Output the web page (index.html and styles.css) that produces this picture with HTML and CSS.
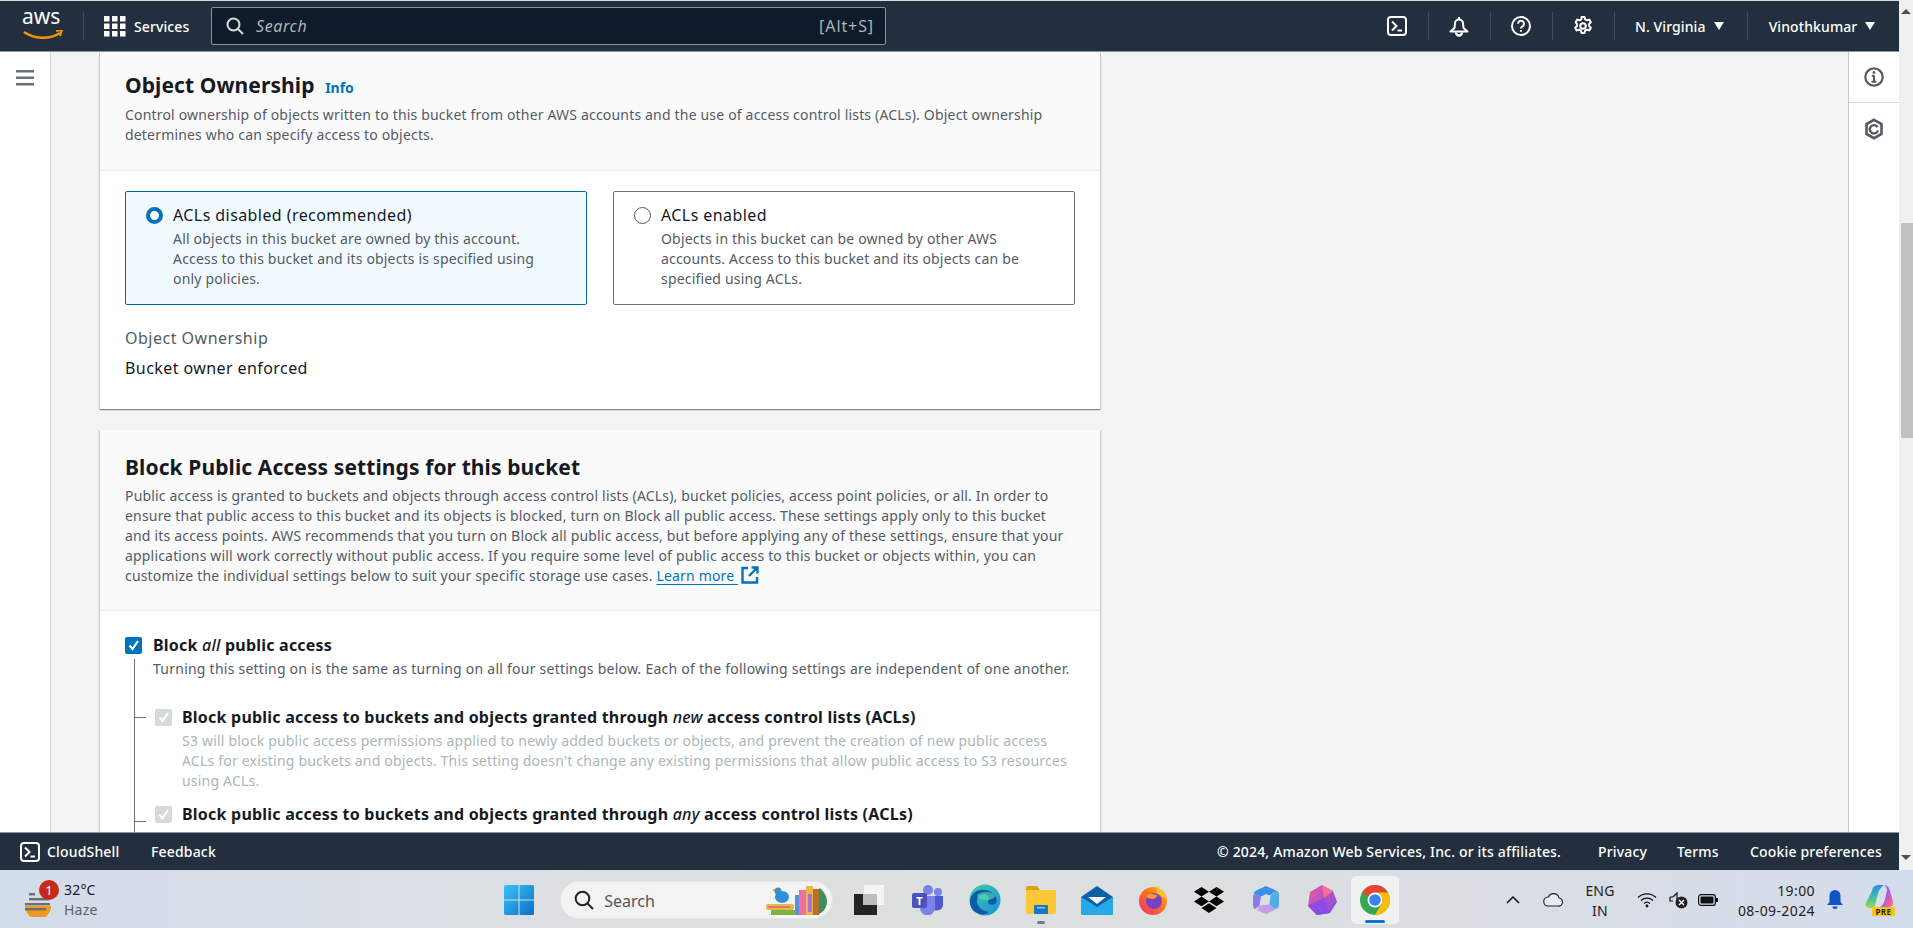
FILE: index.html
```html
<!DOCTYPE html>
<html lang="en">
<head>
<meta charset="utf-8">
<title>S3 Create bucket</title>
<link rel="stylesheet" href="styles.css">
</head>
<body>
<div class="app">
  <div class="console">
    <header class="topbar">
      <div class="aws-logo">
        <span class="aws-text">aws</span>
        <svg width="42" height="14" viewBox="0 0 42 14">
          <path d="M2 2c10 7 25 8 36 1" fill="none" stroke="#f79400" stroke-width="2.600"/>
          <path d="M34 1l6-1-2 6" fill="none" stroke="#f79400" stroke-width="2"/>
        </svg>
      </div>
      <span class="top-sep sep-logo"></span>
      <svg class="grid-icon" width="22" height="21" viewBox="0 0 22 21" fill="#fff">
        <rect x="0" y="0" width="5.500" height="5.500"/><rect x="8" y="0" width="5.500" height="5.500"/><rect x="16" y="0" width="5.500" height="5.500"/>
        <rect x="0" y="7.500" width="5.500" height="5.500"/><rect x="8" y="7.500" width="5.500" height="5.500"/><rect x="16" y="7.500" width="5.500" height="5.500"/>
        <rect x="0" y="15" width="5.500" height="5.500"/><rect x="8" y="15" width="5.500" height="5.500"/><rect x="16" y="15" width="5.500" height="5.500"/>
      </svg>
      <span class="services">Services</span>
      <div class="searchbox">
        <svg width="18" height="18" viewBox="0 0 18 18" fill="none" stroke="#d5dbdb" stroke-width="2"><circle cx="7.500" cy="7.500" r="6"/><path d="M12 12l5 5"/></svg>
        <span class="search-ph">Search</span>
        <span class="search-key">[Alt+S]</span>
      </div>
      <div class="top-right">
        <span class="top-icon">
          <svg width="20" height="20" viewBox="0 0 20 20" fill="none" stroke="#fff" stroke-width="2"><rect x="1" y="1" width="18" height="18" rx="3"/><path d="M5 5.500l4.500 4.500L5 14.500M10.500 14.500H15"/></svg>
        </span>
        <span class="top-sep"></span>
        <span class="top-icon">
          <svg width="20" height="21" viewBox="0 0 20 21" fill="none" stroke="#fff" stroke-width="2"><path d="M10 1v2.500M5.500 12L6 7.500a4 4 0 0 1 8 0l.5 4.500 4 3.500H1.500z" stroke-linejoin="round"/><path d="M7 16.500a3 3 0 0 0 6 0" stroke-width="2.400"/></svg>
        </span>
        <span class="top-sep"></span>
        <span class="top-icon">
          <svg width="20" height="20" viewBox="0 0 20 20" fill="none" stroke="#fff" stroke-width="2"><circle cx="10" cy="10" r="9"/><path d="M7 7.700a3 3 0 1 1 4.500 2.600c-1 .6-1.500 1-1.500 2.200"/><path d="M10 14v1.800"/></svg>
        </span>
        <span class="top-sep"></span>
        <span class="top-icon">
          <svg width="20" height="20" viewBox="0 0 20 20" fill="none" stroke="#fff" stroke-width="2" stroke-linejoin="round"><circle cx="10" cy="10" r="2.800"/><path d="M8.500 1h3l.6 2.300 1.900 1 2.300-.7 1.500 2.700-1.700 1.600v2.200l1.700 1.600-1.500 2.700-2.300-.7-1.900 1-.6 2.300h-3l-.6-2.300-1.900-1-2.300.7-1.500-2.700 1.700-1.600V7.900L2.700 6.300l1.500-2.700 2.300.7 1.900-1z"/></svg>
        </span>
        <span class="top-sep"></span>
        <span class="top-menu region">N. Virginia<i class="tri"></i></span>
        <span class="top-sep"></span>
        <span class="top-menu user">Vinothkumar<i class="tri"></i></span>
      </div>
    </header>

    <div class="workspace">
      <nav class="sidenav">
        <svg width="18" height="16" viewBox="0 0 18 16" fill="#687078"><rect width="18" height="2.500"/><rect y="6.500" width="18" height="2.500"/><rect y="13" width="18" height="2.500"/></svg>
      </nav>

      <main class="content">
        <section class="card">
          <div class="card-head first">
            <h2 class="card-title">Object Ownership <a class="info">Info</a></h2>
            <p class="card-desc">Control ownership of objects written to this bucket from other AWS accounts and the use of access control lists (ACLs). Object ownership determines who can specify access to objects.</p>
          </div>
          <div class="card-body own-body">
            <div class="tiles">
              <div class="tile selected">
                <span class="radio on"></span>
                <div>
                  <div class="tile-label">ACLs disabled (recommended)</div>
                  <div class="tile-desc">All objects in this bucket are owned by this account. Access to this bucket and its objects is specified using only policies.</div>
                </div>
              </div>
              <div class="tile">
                <span class="radio"></span>
                <div>
                  <div class="tile-label">ACLs enabled</div>
                  <div class="tile-desc">Objects in this bucket can be owned by other AWS accounts. Access to this bucket and its objects can be specified using ACLs.</div>
                </div>
              </div>
            </div>
            <div class="kv-key">Object Ownership</div>
            <div class="kv-val">Bucket owner enforced</div>
          </div>
        </section>

        <section class="card second">
          <div class="card-head">
            <h2 class="card-title">Block Public Access settings for this bucket</h2>
            <p class="card-desc">Public access is granted to buckets and objects through access control lists (ACLs), bucket policies, access point policies, or all. In order to ensure that public access to this bucket and its objects is blocked, turn on Block all public access. These settings apply only to this bucket and its access points. AWS recommends that you turn on Block all public access, but before applying any of these settings, ensure that your applications will work correctly without public access. If you require some level of public access to this bucket or objects within, you can customize the individual settings below to suit your specific storage use cases. <a class="learn">Learn more </a><svg class="ext" width="18" height="18" viewBox="0 0 18 18" fill="none" stroke="#0073bb" stroke-width="2.400"><path d="M7 2H1.500v14.500H16V11M10.500 1.500H16.500V7.500M16 2L8 10"/></svg></p>
          </div>
          <div class="card-body block-body">
            <div class="check-row">
              <span class="check on"><svg width="16" height="16" viewBox="0 0 16 16" fill="none" stroke="#fff" stroke-width="2.200"><path d="M3.500 8.500l3 3.500 5.500-8"/></svg></span>
              <span class="check-label">Block <em>all</em> public access</span>
            </div>
            <div class="tree">
              <p class="all-desc">Turning this setting on is the same as turning on all four settings below. Each of the following settings are independent of one another.</p>
              <div class="sub-row">
                <span class="tick"></span>
                <span class="check off"><svg width="16" height="16" viewBox="0 0 16 16" fill="none" stroke="#fff" stroke-width="2.200"><path d="M3.500 8.500l3 3.500 5.500-8"/></svg></span>
                <span class="check-label">Block public access to buckets and objects granted through <em>new</em> access control lists (ACLs)</span>
              </div>
              <p class="sub-desc">S3 will block public access permissions applied to newly added buckets or objects, and prevent the creation of new public access ACLs for existing buckets and objects. This setting doesn't change any existing permissions that allow public access to S3 resources using ACLs.</p>
              <div class="sub-row second-row">
                <span class="tick low"></span>
                <span class="check off"><svg width="16" height="16" viewBox="0 0 16 16" fill="none" stroke="#fff" stroke-width="2.200"><path d="M3.500 8.500l3 3.500 5.500-8"/></svg></span>
                <span class="check-label">Block public access to buckets and objects granted through <em>any</em> access control lists (ACLs)</span>
              </div>
            </div>
          </div>
        </section>
      </main>

      <aside class="rail">
        <div class="rail-btn info-btn">
          <svg width="20" height="20" viewBox="0 0 20 20" fill="none" stroke="#545b64" stroke-width="2.200"><circle cx="10" cy="10" r="8.700"/><path d="M10 8.500v6M7.500 14.800h5M7.800 8.800H10" stroke-width="2"/><circle cx="10" cy="5.500" r="1.400" fill="#545b64" stroke="none"/></svg>
        </div>
        <div class="rail-btn">
          <svg width="20" height="22" viewBox="0 0 20 22" fill="none" stroke="#545b64" stroke-width="2.600"><path d="M10 1.800l7.500 4.300v9.800L10 20.200l-7.500-4.300V6.100z"/><path d="M13.500 9a4.200 4.200 0 1 0 .5 3.500" stroke-width="2.400"/></svg>
        </div>
      </aside>
    </div>

    <footer class="footbar">
      <svg width="20" height="20" viewBox="0 0 20 20" fill="none" stroke="#fff" stroke-width="2"><rect x="1" y="1" width="18" height="18" rx="3"/><path d="M5 5.500l4.500 4.500L5 14.500M10.500 14.500H15"/></svg>
      <span class="foot-shell">CloudShell</span>
      <span class="foot-feedback">Feedback</span>
      <span class="foot-copy">© 2024, Amazon Web Services, Inc. or its affiliates.</span>
      <span class="foot-privacy">Privacy</span>
      <span class="foot-terms">Terms</span>
      <span class="foot-cookie">Cookie preferences</span>
    </footer>
  </div>

  <div class="scrollbar">
    <span class="sb-up"></span>
    <span class="sb-thumb"></span>
    <span class="sb-down"></span>
  </div>
</div>

<div class="taskbar">
  <div class="weather">
    <span class="weather-icon">
      <svg width="30" height="34" viewBox="0 0 30 34">
        <path d="M1 18a13 13 0 0 0 26 0z" fill="#ee9a22" transform="translate(0 5)"/>
        <g fill="#6e6e6e"><rect x="5" y="10" width="6" height="2.400"/><rect x="5" y="15" width="20" height="2.400"/><rect x="1" y="20" width="25" height="2.400"/><rect x="1" y="25" width="21" height="2.400"/></g>
      </svg>
      <span class="badge">1</span>
    </span>
    <span class="weather-text"><span class="temp">32°C</span><span class="cond">Haze</span></span>
  </div>

  <div class="tb-apps">
    <span class="tb-app">
      <svg width="30" height="30" viewBox="0 0 30 30"><defs><linearGradient id="w" x1="0" y1="0" x2="1" y2="1"><stop offset="0" stop-color="#3cc3f8"/><stop offset="1" stop-color="#0a6fc4"/></linearGradient></defs><path d="M0 1.500A1.500 1.500 0 0 1 1.500 0h13v14.500H0zM15.500 0h13A1.500 1.500 0 0 1 30 1.500v13H15.500zM0 15.500h14.500V30h-13A1.500 1.500 0 0 1 0 28.500zM15.500 15.500H30v13a1.500 1.500 0 0 1-1.500 1.500h-13z" fill="url(#w)"/></svg>
    </span>
    <div class="tb-search">
      <svg width="20" height="20" viewBox="0 0 20 20" fill="none" stroke="#222" stroke-width="2"><circle cx="8.500" cy="8.500" r="6.800"/><path d="M13.500 13.500l5.500 5.500"/></svg>
      <span class="tb-search-text">Search</span>
      <svg class="books" width="64" height="32" viewBox="0 0 64 32">
        <rect x="1" y="20" width="28" height="6" rx="2" fill="#e8b84a"/><rect x="6" y="26" width="24" height="5" fill="#7cb342"/><rect x="3" y="22" width="22" height="2" fill="#d77"/>
        <ellipse cx="17" cy="13" rx="7" ry="6" fill="#2f8fd8"/><circle cx="13" cy="7" r="3.500" fill="#2f8fd8"/><path d="M10 5l-3 1 3 2z" fill="#f0a020"/>
        <rect x="30" y="11" width="4" height="20" fill="#5a8fdc"/><rect x="34" y="6" width="7" height="25" fill="#ef6f9e"/><rect x="41" y="2" width="7" height="29" fill="#e7b84a"/><rect x="43" y="10" width="4" height="18" fill="#a86fd8"/><rect x="48" y="5" width="6" height="26" fill="#b5702c"/><path d="M54 4c6 3 8 10 8 14s-3 10-8 12z" fill="#3f8f58"/>
      </svg>
    </div>
    <span class="tb-app first-app">
      <svg width="30" height="30" viewBox="0 0 30 30"><rect x="10" y="0" width="20" height="20" fill="#f4f4f4"/><rect x="0" y="9" width="23" height="21" fill="#242424"/><rect x="9" y="9" width="14" height="11" fill="#bdbdbd"/></svg>
    </span>
    <span class="tb-app teams">
      <svg width="32" height="30" viewBox="0 0 32 30"><circle cx="26" cy="7" r="4" fill="#7b83eb"/><circle cx="16" cy="5" r="5" fill="#7b83eb"/><path d="M21 11h10v9a6 6 0 0 1-10 4z" fill="#5059c9"/><path d="M8 11h15v12a7 7 0 0 1-15 0z" fill="#7b83eb"/><rect x="0" y="8" width="15" height="15" rx="2" fill="#4b53bc"/><text x="7.500" y="20" class="teams-t">T</text></svg>
    </span>
    <span class="tb-app">
      <svg width="32" height="32" viewBox="0 0 32 32"><defs><linearGradient id="e" x1="0" y1="0" x2="1" y2="1"><stop offset="0" stop-color="#3ad0a6"/><stop offset="1" stop-color="#1b8fd8"/></linearGradient></defs><circle cx="16" cy="16" r="15.500" fill="url(#e)"/><path d="M1 17C2 6 14 3 22 8c5 3 7 8 5 11-2 3-8 2-8-1 0-2 2-3 0-6-3-3-9-2-11 3-1 5 3 12 12 13-3 3-8 3-12 1C3 27 1 22 1 17z" fill="#0f5aa8"/><ellipse cx="17" cy="12" rx="9" ry="4" fill="#5ee0b6" opacity=".6"/></svg>
    </span>
    <span class="tb-app with-dot">
      <svg width="30" height="28" viewBox="0 0 30 28"><path d="M0 2a2 2 0 0 1 2-2h9l3 4h14v6H0z" fill="#d6a21c"/><path d="M0 4h30v22a2 2 0 0 1-2 2H2a2 2 0 0 1-2-2z" fill="#fcc934"/><path d="M9 19h12a1 1 0 0 1 1 1v8H8v-8a1 1 0 0 1 1-1z" fill="#1779c4"/><rect x="11" y="21" width="8" height="1.500" fill="#7cc4f0"/></svg>
      <i class="run-dot"></i>
    </span>
    <span class="tb-app">
      <svg width="32" height="29" viewBox="0 0 32 29"><path d="M16 0L0 11v16a2 2 0 0 0 2 2h28a2 2 0 0 0 2-2V11z" fill="#0f5fa8"/><path d="M7 11h18l-9 7z" fill="#f3f6fa"/><path d="M0 11l16 10 16-10v16a2 2 0 0 1-2 2H2a2 2 0 0 1-2-2z" fill="#27a9e8"/></svg>
    </span>
    <span class="tb-app">
      <svg width="30" height="30" viewBox="0 0 30 30"><defs><linearGradient id="f" x1="0" y1="1" x2="1" y2="0"><stop offset="0" stop-color="#ef2b6e"/><stop offset=".6" stop-color="#ff7a1a"/><stop offset="1" stop-color="#ffc51c"/></linearGradient></defs><circle cx="15" cy="16" r="14" fill="url(#f)"/><path d="M20 0c1 5 7 7 8 13L18 9z" fill="#ffc51c"/><circle cx="16" cy="16" r="8" fill="#7b3fc8"/><path d="M8 11c4-3 9-2 12 0-3 1-4 3-4 3-3 0-6 0-8-3z" fill="#ff9a26"/></svg>
    </span>
    <span class="tb-app">
      <svg width="30" height="26" viewBox="0 0 30 26" fill="#000"><path d="M7.500 0L15 4.800 7.500 9.600 0 4.800zM22.500 0L30 4.800l-7.500 4.800L15 4.800zM0 14.400l7.500-4.800 7.500 4.800-7.500 4.800zM22.500 9.600l7.500 4.800-7.500 4.800-7.500-4.800zM7.500 21l7.500-4.800 7.500 4.800L15 26z"/></svg>
    </span>
    <span class="tb-app">
      <svg width="28" height="30" viewBox="0 0 28 30"><path d="M14 1l10 4.500-6 5-4-1.500-5 2.500L2 9A4 4 0 0 1 4 5.500z" fill="#3b8fe6"/><path d="M24 5.500a4 4 0 0 1 3 4v11a4 4 0 0 1-3 3.500l-7-2 1.500-11.500z" fill="#4fb0e8"/><path d="M2 9l7 2.500-1.500 9L3 24A4 4 0 0 1 1 20.500V11z" fill="#8a7ae6"/><path d="M7.500 20.500l10-1 6.500 4.500L14 29 5 25z" fill="#c79be8"/></svg>
    </span>
    <span class="tb-app">
      <svg width="30" height="30" viewBox="0 0 30 30"><defs><linearGradient id="g" x1="0" y1="0" x2="1" y2="1"><stop offset="0" stop-color="#f05a9e"/><stop offset="1" stop-color="#7a4fe8"/></linearGradient></defs><path d="M15 0l11 6 4 11-7 11-13 2-9-9L3 7z" fill="url(#g)"/><path d="M15 0l11 6-9 7z" fill="#f4709a"/><path d="M1 21l16-8 6 15-13 2z" fill="#8c4be6"/></svg>
    </span>
    <span class="tb-chrome">
      <svg width="30" height="30" viewBox="0 0 30 30"><circle cx="15" cy="15" r="15" fill="#34a853"/><path d="M15 0a15 15 0 0 1 13 7.500H15a7.500 7.500 0 0 0-6.500 3.750L2.100 7.600A15 15 0 0 1 15 0z" fill="#ea4335"/><path d="M28 7.500A15 15 0 0 1 15 30l6.500-11.250A7.500 7.500 0 0 0 15 7.500z" fill="#fbbc04"/><circle cx="15" cy="15" r="7.500" fill="#fff"/><circle cx="15" cy="15" r="5.800" fill="#3b82f0"/></svg>
      <i class="active-bar"></i>
    </span>
  </div>

  <div class="tray">
    <svg class="chev" width="14" height="8" viewBox="0 0 14 8" fill="none" stroke="#111" stroke-width="1.500"><path d="M1 7l6-6 6 6"/></svg>
    <svg class="cloud" width="20" height="14" viewBox="0 0 20 14" fill="#e8ecf2" stroke="#222" stroke-width="1.200"><path d="M5 13h10a4 4 0 0 0 1-8 5.500 5.500 0 0 0-10.500-1A4.500 4.500 0 0 0 5 13z"/></svg>
    <span class="lang">ENG<br>IN</span>
    <svg class="wifi" width="20" height="16" viewBox="0 0 20 16" fill="none" stroke="#111" stroke-width="1.200"><path d="M1 5.500a13 13 0 0 1 18 0M4 8.500a9 9 0 0 1 12 0M7 11.500a4.500 4.500 0 0 1 6 0"/><circle cx="10" cy="14" r="1.400" fill="#111" stroke="none"/></svg>
    <svg class="vol" width="19" height="18" viewBox="0 0 19 18"><path d="M1 6h3l4-4v8" fill="none" stroke="#111" stroke-width="1.200"/><path d="M1 6v4h3" fill="none" stroke="#111" stroke-width="1.200"/><circle cx="12.500" cy="11.500" r="6" fill="#222"/><path d="M10 9l5 5M15 9l-5 5" stroke="#fff" stroke-width="1.300"/></svg>
    <svg class="batt" width="20" height="12" viewBox="0 0 20 12"><rect x=".6" y=".6" width="16.800" height="10.800" rx="2.500" fill="none" stroke="#111" stroke-width="1.200"/><rect x="2.500" y="2.500" width="13" height="7" rx="1" fill="#111"/><rect x="18" y="4" width="2" height="4" fill="#111"/></svg>
    <span class="clock"><span>19:00</span><span>08-09-2024</span></span>
    <svg class="tb-bell" width="16" height="20" viewBox="0 0 16 20" fill="#1254c8"><path d="M8 0a5.500 5.500 0 0 1 5.500 5.500V12l2.500 3H0l2.500-3V5.500A5.500 5.500 0 0 1 8 0z"/><path d="M5.500 16.500h5a2.500 2.500 0 0 1-5 0z"/></svg>
    <span class="copilot">
      <svg width="30" height="28" viewBox="0 0 30 28"><defs><linearGradient id="c1" x1="0" y1="0" x2="0" y2="1"><stop offset="0" stop-color="#2a8fe8"/><stop offset=".6" stop-color="#46c0a0"/><stop offset="1" stop-color="#a8d84a"/></linearGradient><linearGradient id="c2" x1="0" y1="0" x2="1" y2="1"><stop offset="0" stop-color="#2f8ff0"/><stop offset=".45" stop-color="#a45cf0"/><stop offset=".8" stop-color="#f0609a"/><stop offset="1" stop-color="#f8a040"/></linearGradient></defs><path d="M7 6a6 6 0 0 1 6-6h6c-3 2-5 5-6.500 10L10 20a3 3 0 0 1-3 3H4a3.500 3.500 0 0 1-3.400-4.500z" fill="url(#c1)"/><path d="M19 0c3 0 5 2 6 6l3 11c.6 2.500-1 5-4 5h-9c2.500-1.500 4-4 5-8l2-8c.3-2.500-1-5-3-6z" fill="url(#c2)"/></svg>
      <span class="pre">PRE</span>
    </span>
  </div>
</div>
</body>
</html>
```

FILE: styles.css
```css
* { box-sizing: border-box; }
html, body { margin: 0; height: 100%; overflow: hidden; }
body { display: flex; flex-direction: column; width: 1913px; height: 928px; font-family: "Noto Sans", "Open Sans", sans-serif; color: #16191f; background: #f2f3f3; }
p, h2 { margin: 0; }

.app { display: flex; height: 870px; }
.console { width: 1899px; display: flex; flex-direction: column; }

/* top bar */
.topbar { height: 52px; flex: none; background: #232f3e; border-top: 1px solid #d8dde3; border-bottom: 1px solid #8a96a3; display: flex; align-items: center; color: #fff; font-size: 14px; }
.aws-logo { margin-left: 22px; flex: none; width: 42px; display: flex; flex-direction: column; }
.aws-text { font-size: 21px; line-height: 21px; color: #fff; margin-top: -3px; }
.aws-logo svg { margin-top: 3px; display: block; }
.top-sep { width: 1px; height: 28px; background: #414d5c; flex: none; }
.sep-logo { margin-left: 19px; }
.grid-icon { margin-left: 20px; flex: none; }
.services { margin-left: 8px; font-weight: 500; width: 69px; letter-spacing: .1px; }
.searchbox { width: 675px; height: 38px; margin-left: 8px; background: #0f1b2a; border: 1px solid #879596; border-radius: 2px; display: flex; align-items: center; padding: 0 11px 0 14px; }
.search-ph { margin-left: 12px; font-style: italic; color: #aab7b8; font-size: 16px; letter-spacing: .6px; flex: 1; }
.search-key { color: #aab7b8; font-size: 16px; letter-spacing: .9px; }
.top-right { margin-left: 491px; display: flex; align-items: center; }
.top-icon { width: 40px; display: flex; justify-content: center; }
.top-icon + .top-sep { margin: 0 10.500px; }
.top-menu { display: flex; align-items: center; font-weight: 500; white-space: nowrap; letter-spacing: .1px; }
.region { padding: 0 23px 0 10px; }
.user { padding: 0 0 0 21px; }
.tri { width: 0; height: 0; border-left: 5.500px solid transparent; border-right: 5.500px solid transparent; border-top: 8px solid #fff; margin-left: 8px; }

/* workspace */
.workspace { flex: 1; min-height: 0; display: flex; overflow: hidden; background: #f2f3f3; }
.sidenav { width: 51px; flex: none; background: #fff; border-right: 1px solid #d5dbdb; padding: 17px 0 0 16px; }
.content { flex: 1; min-width: 0; padding-left: 49px; overflow: hidden; }
.rail { width: 51px; flex: none; background: #fff; border-left: 1px solid #c8cccc; }
.rail-btn { height: 52px; display: flex; align-items: center; justify-content: center; }
.info-btn { height: 51px; border-bottom: 1px solid #d5dbdb; }

.card { width: 1000px; background: #fff; box-shadow: 0 1px 1px 0 rgba(0,28,36,.3), 1px 1px 1px 0 rgba(0,28,36,.15), -1px 1px 1px 0 rgba(0,28,36,.15); }
.card.second { margin-top: 21px; }
.card-head { background: #fafafa; border-bottom: 1px solid #eaeded; padding: 24px 25px 24px; }
.card-head.first { padding-top: 18px; height: 119px; }
.card-title { font-size: 21px; line-height: 30px; font-weight: 700; letter-spacing: .1px; }
.first .card-title { margin-bottom: 2px; }
.second .card-title { margin-bottom: 6px; line-height: 26px; }
.info { font-size: 14px; color: #0073bb; font-weight: 700; margin-left: 5px; letter-spacing: 0; }
.card-desc { font-size: 14px; line-height: 20px; color: #545b64; letter-spacing: .18px; }
.learn { color: #0073bb; text-decoration: underline; text-underline-offset: 3px; }
.ext { vertical-align: -3px; margin-left: 3px; }

.own-body { padding: 20px 25px 0; height: 238px; }
.tiles { display: flex; gap: 26px; }
.tile { width: 462px; height: 114px; border: 1px solid #687078; border-radius: 2px; padding: 12px 15px 0 20px; display: flex; gap: 10px; }
.tile.selected { background: #f1faff; border-color: #00689d; }
.radio { width: 17px; height: 17px; border-radius: 50%; border: 1px solid #545b64; flex: none; margin-top: 3px; background: #fff; }
.radio.on { border: 4.500px solid #0073bb; }
.tile-label { font-size: 16px; line-height: 22px; color: #16191f; margin-bottom: 3px; letter-spacing: .42px; }
.tile-desc { font-size: 14px; line-height: 20px; color: #545b64; width: 378px; letter-spacing: .18px; }
.kv-key { margin-top: 22px; font-size: 16px; line-height: 22px; color: #545b64; letter-spacing: .5px; }
.kv-val { margin-top: 8px; font-size: 16px; line-height: 22px; letter-spacing: .42px; }

.block-body { padding: 24px 25px 0; }
.check-row { display: flex; align-items: center; height: 20px; gap: 11px; }
.check { width: 17px; height: 17px; border-radius: 2px; flex: none; display: flex; align-items: center; justify-content: center; }
.check.on { background: #0073bb; }
.check.off { background: #d5dbdb; }
.check-label { font-size: 16px; line-height: 20px; font-weight: 700; white-space: nowrap; letter-spacing: .22px; }
.check-label em { font-weight: 500; }
.tree { margin-left: 9px; border-left: 1px solid #687078; height: 240px; margin-top: 4px; }
.all-desc { font-size: 14px; line-height: 20px; color: #545b64; padding-left: 18px; letter-spacing: .24px; white-space: nowrap; }
.sub-row { display: flex; align-items: center; height: 20px; margin-top: 28px; }
.second-row { margin-top: 13px; }
.tick { width: 11px; height: 1px; background: #687078; margin-right: 9px; flex: none; }
.tick.low { transform: translateY(7px); }
.sub-row .check { margin-right: 10px; }
.sub-desc { font-size: 14px; line-height: 20px; color: #aab7b8; padding-left: 47px; margin-top: 4px; width: 942px; letter-spacing: .2px; }

/* footer */
.footbar { height: 38px; flex: none; background: #232f3e; border-top: 1px solid #8a96a3; display: flex; align-items: center; color: #fff; font-size: 14px; font-weight: 500; padding-left: 20px; white-space: nowrap; letter-spacing: .17px; }
.foot-shell { margin-left: 7px; width: 104px; }
.foot-feedback { width: 80px; }
.foot-copy { margin-left: 986px; width: 381px; }
.foot-privacy { width: 79px; }
.foot-terms { width: 73px; }

/* scrollbar */
.scrollbar { width: 14px; flex: none; background: #f0f0f0; display: flex; flex-direction: column; align-items: flex-end; }
.sb-up, .sb-down { width: 0; height: 0; border-left: 5px solid transparent; border-right: 5px solid transparent; flex: none; margin-right: 2px; }
.sb-up { border-bottom: 5px solid #505050; margin-top: 9px; }
.sb-thumb { width: 12px; height: 215px; background: #c1c1c1; margin-top: 209px; flex: none; }
.sb-down { border-top: 5px solid #505050; margin-top: auto; margin-bottom: 10px; }

/* taskbar */
.taskbar { flex: 1; display: flex; align-items: center; padding-top: 2px; background: linear-gradient(90deg, #d3dcea 0%, #dadfe6 20%, #dddfdf 40%, #dcdfe0 65%, #d8dde6 85%, #d4ddec 100%); }
.weather { width: 491px; flex: none; display: flex; align-items: center; padding-left: 24px; }
.weather-icon { width: 30px; height: 34px; position: relative; flex: none; }
.badge { position: absolute; left: 15px; top: -3px; width: 20px; height: 20px; border-radius: 50%; background: #c42b1c; color: #fff; font-size: 13px; line-height: 20px; text-align: center; }
.weather-text { display: flex; flex-direction: column; margin-left: 10px; font-size: 14px; line-height: 20px; letter-spacing: .2px; }
.cond { color: #5a5f66; }
.tb-apps { display: flex; align-items: center; width: 917px; flex: none; }
.tb-app { width: 56.200px; height: 48px; display: flex; align-items: center; justify-content: center; flex: none; position: relative; }
.tb-search { width: 273px; height: 38px; margin-left: 13px; border-radius: 19px; background: #f3f3f3; border: 1px solid #e6e6e6; display: flex; align-items: center; padding: 0 3px 0 13px; flex: none; }
.tb-search-text { flex: 1; margin-left: 10px; padding-top: 1px; font-size: 16px; color: #555; }
.first-app { margin-left: 8px; }
.teams { margin-left: 3px; }
.teams-t { font: 700 11px "Noto Sans", sans-serif; fill: #fff; text-anchor: middle; }
.run-dot { position: absolute; left: 24px; bottom: 0; width: 8px; height: 3px; border-radius: 2px; background: #7a7a7a; }
.tb-chrome { width: 48px; height: 48px; margin-left: 1px; background: #f0f1f1; border-radius: 5px; display: flex; align-items: center; justify-content: center; position: relative; flex: none; }
.active-bar { position: absolute; left: 14px; bottom: 1px; width: 20px; height: 3px; border-radius: 2px; background: #0f74d1; }
.tray { flex: 1; display: flex; align-items: center; }
.chev { margin-left: 98px; flex: none; }
.cloud { margin-left: 23px; flex: none; }
.lang { margin-left: 19px; margin-top: 2px; width: 36px; font-size: 14px; line-height: 20px; text-align: center; color: #222; letter-spacing: .2px; }
.wifi { margin-left: 19px; flex: none; }
.vol { margin-left: 12px; flex: none; }
.batt { margin-left: 10px; flex: none; }
.clock { margin-left: 18px; margin-top: 2px; width: 79px; display: flex; flex-direction: column; align-items: flex-end; font-size: 14px; line-height: 20px; color: #222; white-space: nowrap; letter-spacing: .4px; }
.tb-bell { margin-left: 12px; flex: none; }
.copilot { margin-left: 22px; position: relative; width: 30px; height: 30px; flex: none; }
.pre { position: absolute; right: 0; bottom: -1px; width: 23px; background: #f5c518; color: #222; font-size: 8px; line-height: 9px; font-weight: 700; text-align: center; border-radius: 1px; letter-spacing: .5px; }
```
